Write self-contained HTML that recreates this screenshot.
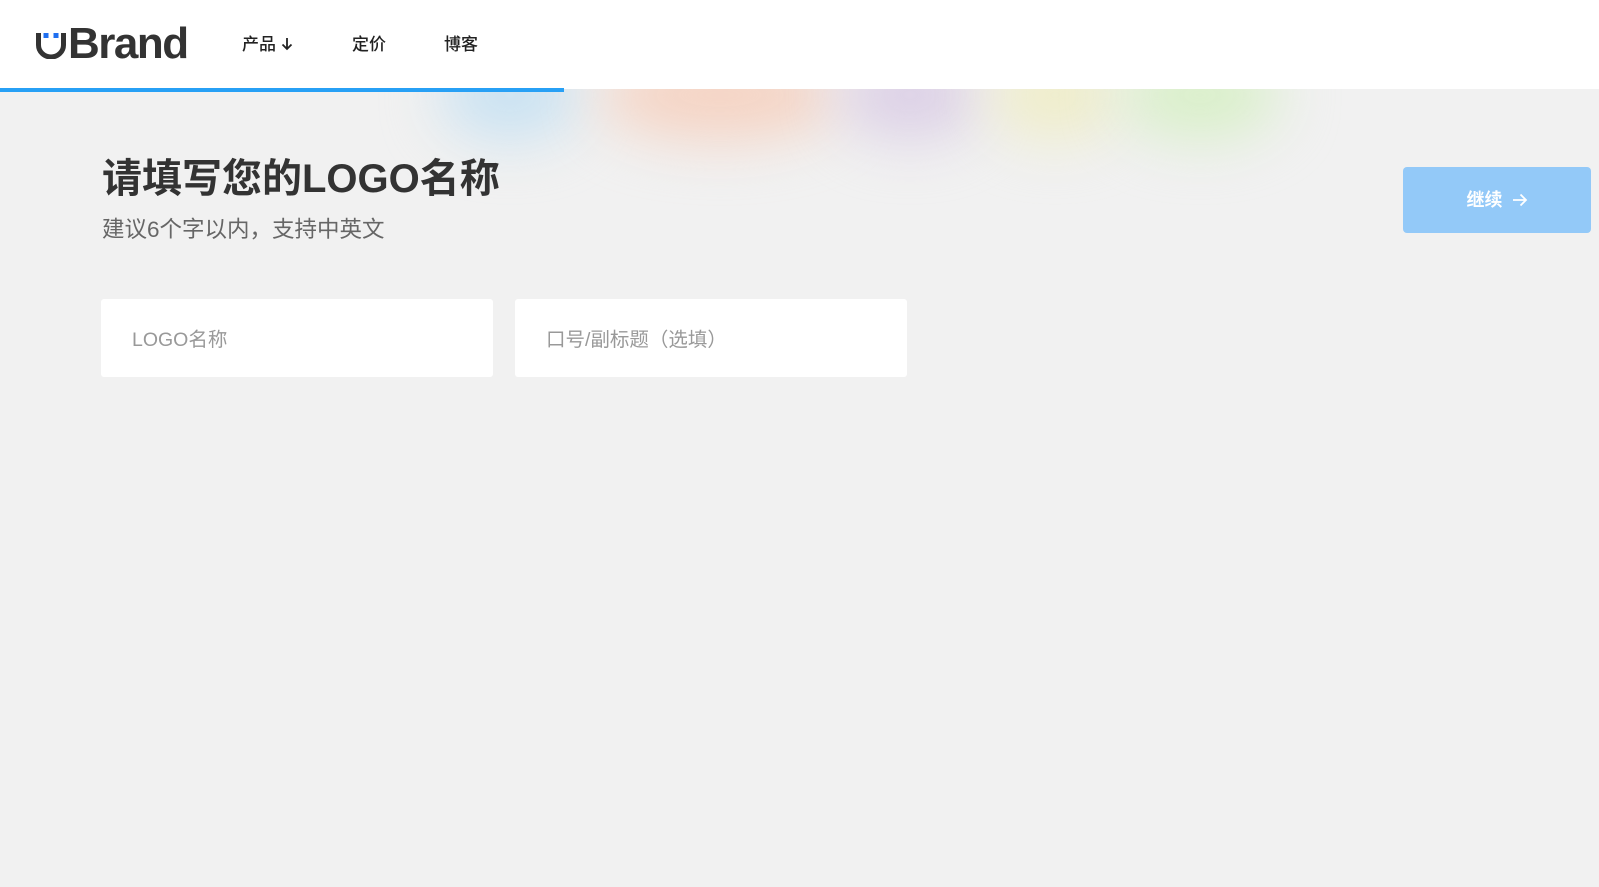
<!DOCTYPE html>
<html><head><meta charset="utf-8"><style>
*{margin:0;padding:0;box-sizing:border-box}
body{width:1599px;height:887px;background:#f1f1f1;font-family:"Liberation Sans","Noto Sans CJK SC",sans-serif;position:relative;overflow:hidden}
.hdr{position:absolute;left:0;top:0;width:1599px;height:89px;background:#fff}
.bar{position:absolute;left:0;top:88px;width:564px;height:4px;background:#27a0f5}
.glow{position:absolute;top:50px;height:90px;border-radius:50%;filter:blur(28px)}
.logo{position:absolute;left:35px;top:19px;font-size:44px;font-weight:bold;color:#333;letter-spacing:-1.5px}
.nav{position:absolute;top:30px;font-size:17px;color:#222;font-weight:500}
h1{position:absolute;left:102px;top:156px;font-size:40px;font-weight:bold;color:#333;line-height:46px;white-space:nowrap}
.sub{position:absolute;left:102px;top:215px;font-size:22.5px;color:#666;line-height:30px;white-space:nowrap}
.in{position:absolute;top:299px;width:392px;height:78px;background:#fff;border-radius:3px;font-size:19.5px;color:#999;padding-left:31px;line-height:82px}
.btn{position:absolute;left:1403px;top:167px;width:188px;height:66px;background:#93c9f8;border-radius:4px;color:#fff;font-size:18px;font-weight:bold;text-align:center;line-height:66px}
</style></head><body>
<div class="glow" style="left:440px;width:140px;background:#c9e2f2"></div>
<div class="glow" style="left:600px;width:240px;background:#f5d3c3"></div>
<div class="glow" style="left:840px;width:140px;background:#dcd0e6"></div>
<div class="glow" style="left:990px;width:130px;background:#efedc9"></div>
<div class="glow" style="left:1120px;width:160px;background:#d9efc9"></div>
<div class="hdr"></div>
<div class="bar"></div>
<div class="logo"><svg width="32" height="32" viewBox="0 0 32 32" style="vertical-align:-1px;margin-right:1px"><rect x="8.5" y="6" width="5" height="5" fill="#1f6ff0"/><rect x="18.5" y="6" width="5" height="5" fill="#1f6ff0"/><path d="M3.5 6 V18 A12.5 12 0 0 0 28.5 18 V6" fill="none" stroke="#333" stroke-width="5"/></svg>Brand</div>
<div class="nav" style="left:242px">产品 <svg width="12" height="14" viewBox="0 0 12 14" style="vertical-align:-1px"><path d="M6 1V12M1.5 7.5L6 12L10.5 7.5" fill="none" stroke="#222" stroke-width="1.8"/></svg></div>
<div class="nav" style="left:352px">定价</div>
<div class="nav" style="left:444px">博客</div>
<h1>请填写您的LOGO名称</h1>
<div class="sub">建议6个字以内，支持中英文</div>
<div class="in" style="left:101px">LOGO名称</div>
<div class="in" style="left:515px">口号/副标题（选填）</div>
<div class="btn">继续 <svg width="16" height="14" viewBox="0 0 16 14" style="vertical-align:-1px;margin-left:4px"><path d="M1 7H14M8.5 1.5L14 7L8.5 12.5" fill="none" stroke="#fff" stroke-width="1.8"/></svg></div>
</body></html>
